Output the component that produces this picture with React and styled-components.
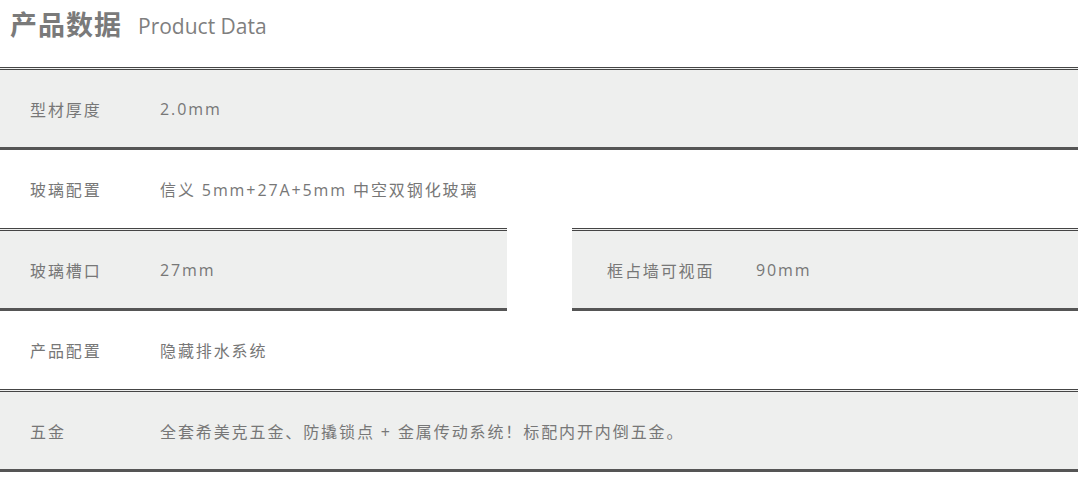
import React from 'react';
import styled, { createGlobalStyle } from 'styled-components';

const GlobalStyle = createGlobalStyle`
  body {
    margin: 0;
    background: #fff;
    font-family: "Open Sans", "Noto Sans CJK SC", sans-serif;
  }
`;

const Page = styled.div`
  width: 1078px;
`;

const Header = styled.div`
  height: 67px;
  display: flex;
  align-items: flex-start;
  padding: 5px 0 0 10px;
  box-sizing: border-box;
  color: #7a7a7a;
`;

const TitleCn = styled.h1`
  margin: 0;
  font-family: "Noto Sans CJK SC", sans-serif;
  font-size: 27px;
  font-weight: 700;
  line-height: 38px;
  letter-spacing: 1px;
`;

const TitleEn = styled.span`
  margin-left: 16px;
  font-family: "Open Sans", sans-serif;
  font-size: 21px;
  line-height: 42px;
  color: #7f7f7f;
`;

const Row = styled.div`
  display: flex;
  justify-content: space-between;
  align-items: flex-start;
`;

const Cell = styled.div`
  width: 100%;
  max-width: calc(100% - 30px);
  height: ${props => (props.shaded ? 77 : 78)}px;
  display: flex;
  align-items: center;
  padding-left: ${props => props.pad || 30}px;
  background: ${props => (props.shaded ? '#eeefee' : 'transparent')};
  border-top: ${props => (props.shaded ? '3px double #454545' : 'none')};
  border-bottom: ${props => (props.shaded ? '3px solid #555' : 'none')};
  font-size: 16px;
  letter-spacing: 1.9px;
  color: #777;
  box-sizing: content-box;
  flex: none;
`;

const HalfCell = styled(Cell)`
  width: ${props => props.w}px;
  max-width: none;
  height: 83px;
  box-sizing: border-box;
`;

const Label = styled.span`
  width: ${props => props.w || 130}px;
  flex: none;
`;

const Value = styled.span``;

const rows = [
  { label: '型材厚度', value: '2.0mm', shaded: true },
  { label: '玻璃配置', value: '信义 5mm+27A+5mm 中空双钢化玻璃' },
  { split: true },
  { label: '产品配置', value: '隐藏排水系统' },
  { label: '五金', value: '全套希美克五金、防撬锁点 + 金属传动系统！标配内开内倒五金。', shaded: true },
];

export default function App() {
  return (
    <Page>
      <GlobalStyle />
      <Header>
        <TitleCn>产品数据</TitleCn>
        <TitleEn>Product Data</TitleEn>
      </Header>
      {rows.map((r, i) =>
        r.split ? (
          <Row key={i}>
            <HalfCell shaded w={507}>
              <Label>玻璃槽口</Label>
              <Value>27mm</Value>
            </HalfCell>
            <HalfCell shaded w={506} pad={35}>
              <Label w={149}>框占墙可视面</Label>
              <Value>90mm</Value>
            </HalfCell>
          </Row>
        ) : (
          <Row key={i}>
            <Cell shaded={r.shaded}>
              <Label>{r.label}</Label>
              <Value>{r.value}</Value>
            </Cell>
          </Row>
        )
      )}
    </Page>
  );
}
